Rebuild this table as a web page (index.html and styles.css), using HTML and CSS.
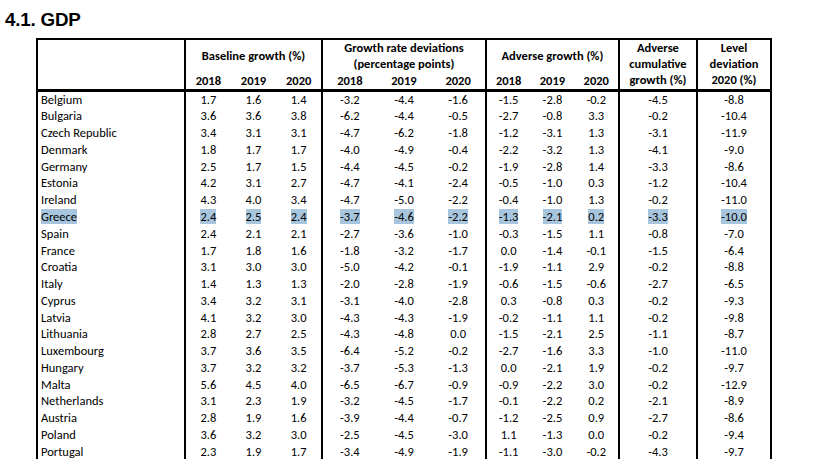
FILE: index.html
```html
<!DOCTYPE html>
<html lang="en">
<head>
<meta charset="utf-8">
<title>4.1. GDP</title>
<link rel="stylesheet" href="styles.css">
</head>
<body>
<h1 class="title">4.1. GDP</h1>
<div class="wrap">
<table class="gdp">
  <colgroup class="g"><col class="c-country"></colgroup>
  <colgroup class="g"><col class="c-base"><col class="c-base"><col class="c-base"></colgroup>
  <colgroup class="g"><col class="c-dev"><col class="c-dev"><col class="c-dev"></colgroup>
  <colgroup class="g"><col class="c-adv"><col class="c-adv"><col class="c-adv"></colgroup>
  <colgroup class="g"><col class="c-cum"></colgroup>
  <colgroup class="g"><col class="c-lvl"></colgroup>
  <thead>
    <tr>
      <th rowspan="3"></th>
      <th colspan="3" rowspan="2">Baseline growth (%)</th>
      <th colspan="3">Growth rate deviations</th>
      <th colspan="3" rowspan="2">Adverse growth (%)</th>
      <th rowspan="3">Adverse<br>cumulative<br>growth (%)</th>
      <th rowspan="3">Level<br>deviation<br>2020 (%)</th>
    </tr>
    <tr>
      <th colspan="3">(percentage points)</th>
    </tr>
    <tr class="years">
      <th>2018</th><th>2019</th><th>2020</th>
      <th>2018</th><th>2019</th><th>2020</th>
      <th>2018</th><th>2019</th><th>2020</th>
    </tr>
  </thead>
  <tbody>
    <tr><td>Belgium</td><td>1.7</td><td>1.6</td><td>1.4</td><td>-3.2</td><td>-4.4</td><td>-1.6</td><td>-1.5</td><td>-2.8</td><td>-0.2</td><td>-4.5</td><td>-8.8</td></tr>
    <tr><td>Bulgaria</td><td>3.6</td><td>3.6</td><td>3.8</td><td>-6.2</td><td>-4.4</td><td>-0.5</td><td>-2.7</td><td>-0.8</td><td>3.3</td><td>-0.2</td><td>-10.4</td></tr>
    <tr><td>Czech Republic</td><td>3.4</td><td>3.1</td><td>3.1</td><td>-4.7</td><td>-6.2</td><td>-1.8</td><td>-1.2</td><td>-3.1</td><td>1.3</td><td>-3.1</td><td>-11.9</td></tr>
    <tr><td>Denmark</td><td>1.8</td><td>1.7</td><td>1.7</td><td>-4.0</td><td>-4.9</td><td>-0.4</td><td>-2.2</td><td>-3.2</td><td>1.3</td><td>-4.1</td><td>-9.0</td></tr>
    <tr><td>Germany</td><td>2.5</td><td>1.7</td><td>1.5</td><td>-4.4</td><td>-4.5</td><td>-0.2</td><td>-1.9</td><td>-2.8</td><td>1.4</td><td>-3.3</td><td>-8.6</td></tr>
    <tr><td>Estonia</td><td>4.2</td><td>3.1</td><td>2.7</td><td>-4.7</td><td>-4.1</td><td>-2.4</td><td>-0.5</td><td>-1.0</td><td>0.3</td><td>-1.2</td><td>-10.4</td></tr>
    <tr><td>Ireland</td><td>4.3</td><td>4.0</td><td>3.4</td><td>-4.7</td><td>-5.0</td><td>-2.2</td><td>-0.4</td><td>-1.0</td><td>1.3</td><td>-0.2</td><td>-11.0</td></tr>
    <tr class="sel"><td><span>Greece</span></td><td><span>2.4</span></td><td><span>2.5</span></td><td><span>2.4</span></td><td><span>-3.7</span></td><td><span>-4.6</span></td><td><span>-2.2</span></td><td><span>-1.3</span></td><td><span>-2.1</span></td><td><span>0.2</span></td><td><span>-3.3</span></td><td><span>-10.0</span></td></tr>
    <tr><td>Spain</td><td>2.4</td><td>2.1</td><td>2.1</td><td>-2.7</td><td>-3.6</td><td>-1.0</td><td>-0.3</td><td>-1.5</td><td>1.1</td><td>-0.8</td><td>-7.0</td></tr>
    <tr><td>France</td><td>1.7</td><td>1.8</td><td>1.6</td><td>-1.8</td><td>-3.2</td><td>-1.7</td><td>0.0</td><td>-1.4</td><td>-0.1</td><td>-1.5</td><td>-6.4</td></tr>
    <tr><td>Croatia</td><td>3.1</td><td>3.0</td><td>3.0</td><td>-5.0</td><td>-4.2</td><td>-0.1</td><td>-1.9</td><td>-1.1</td><td>2.9</td><td>-0.2</td><td>-8.8</td></tr>
    <tr><td>Italy</td><td>1.4</td><td>1.3</td><td>1.3</td><td>-2.0</td><td>-2.8</td><td>-1.9</td><td>-0.6</td><td>-1.5</td><td>-0.6</td><td>-2.7</td><td>-6.5</td></tr>
    <tr><td>Cyprus</td><td>3.4</td><td>3.2</td><td>3.1</td><td>-3.1</td><td>-4.0</td><td>-2.8</td><td>0.3</td><td>-0.8</td><td>0.3</td><td>-0.2</td><td>-9.3</td></tr>
    <tr><td>Latvia</td><td>4.1</td><td>3.2</td><td>3.0</td><td>-4.3</td><td>-4.3</td><td>-1.9</td><td>-0.2</td><td>-1.1</td><td>1.1</td><td>-0.2</td><td>-9.8</td></tr>
    <tr><td>Lithuania</td><td>2.8</td><td>2.7</td><td>2.5</td><td>-4.3</td><td>-4.8</td><td>0.0</td><td>-1.5</td><td>-2.1</td><td>2.5</td><td>-1.1</td><td>-8.7</td></tr>
    <tr><td>Luxembourg</td><td>3.7</td><td>3.6</td><td>3.5</td><td>-6.4</td><td>-5.2</td><td>-0.2</td><td>-2.7</td><td>-1.6</td><td>3.3</td><td>-1.0</td><td>-11.0</td></tr>
    <tr><td>Hungary</td><td>3.7</td><td>3.2</td><td>3.2</td><td>-3.7</td><td>-5.3</td><td>-1.3</td><td>0.0</td><td>-2.1</td><td>1.9</td><td>-0.2</td><td>-9.7</td></tr>
    <tr><td>Malta</td><td>5.6</td><td>4.5</td><td>4.0</td><td>-6.5</td><td>-6.7</td><td>-0.9</td><td>-0.9</td><td>-2.2</td><td>3.0</td><td>-0.2</td><td>-12.9</td></tr>
    <tr><td>Netherlands</td><td>3.1</td><td>2.3</td><td>1.9</td><td>-3.2</td><td>-4.5</td><td>-1.7</td><td>-0.1</td><td>-2.2</td><td>0.2</td><td>-2.1</td><td>-8.9</td></tr>
    <tr><td>Austria</td><td>2.8</td><td>1.9</td><td>1.6</td><td>-3.9</td><td>-4.4</td><td>-0.7</td><td>-1.2</td><td>-2.5</td><td>0.9</td><td>-2.7</td><td>-8.6</td></tr>
    <tr><td>Poland</td><td>3.6</td><td>3.2</td><td>3.0</td><td>-2.5</td><td>-4.5</td><td>-3.0</td><td>1.1</td><td>-1.3</td><td>0.0</td><td>-0.2</td><td>-9.4</td></tr>
    <tr><td>Portugal</td><td>2.3</td><td>1.9</td><td>1.7</td><td>-3.4</td><td>-4.9</td><td>-1.9</td><td>-1.1</td><td>-3.0</td><td>-0.2</td><td>-4.3</td><td>-9.7</td></tr>
  </tbody>
</table>
</div>
</body>
</html>
```

FILE: styles.css
```css
html, body {
  margin: 0;
  padding: 0;
  background: #ffffff;
  color: #000000;
}

body {
  overflow: hidden;
}

.title {
  margin: 10px 0 8px 5px;
  font-family: "Liberation Sans", Arial, sans-serif;
  font-weight: bold;
  font-size: 18.8px;
  line-height: 20px;
  letter-spacing: -0.2px;
}

.wrap {
  padding-left: 36px;
}

.gdp {
  border-collapse: collapse;
  table-layout: fixed;
  width: 736px;
  border: 2px solid #000;
  font-family: Carlito, Calibri, Lato, "Liberation Sans", sans-serif;
  font-size: 12.5px;
  color: #000;
}

.gdp colgroup.g {
  border-left: 2px solid #000;
  border-right: 2px solid #000;
}

.c-country { width: 148px; }
.c-base { width: 45.67px; }
.c-dev { width: 54.67px; }
.c-adv { width: 44.33px; }
.c-cum { width: 78px; }
.c-lvl { width: 74px; }

.gdp th {
  font-weight: bold;
  padding: 0;
  line-height: 16px;
  height: 16px;
  text-align: center;
  vertical-align: middle;
  white-space: nowrap;
}

.gdp thead th[rowspan="3"] {
  line-height: 16.2px;
}

.gdp thead tr.years th,
.gdp thead th[rowspan="3"] {
  border-bottom: 3px solid #000;
}

.gdp td {
  padding: 0;
  height: 16.76px;
  line-height: 16.76px;
  text-align: center;
  white-space: nowrap;
}

.gdp td:first-child {
  text-align: left;
  padding-left: 3px;
}

.gdp tr.sel span {
  background: #a7c6de;
}
```
